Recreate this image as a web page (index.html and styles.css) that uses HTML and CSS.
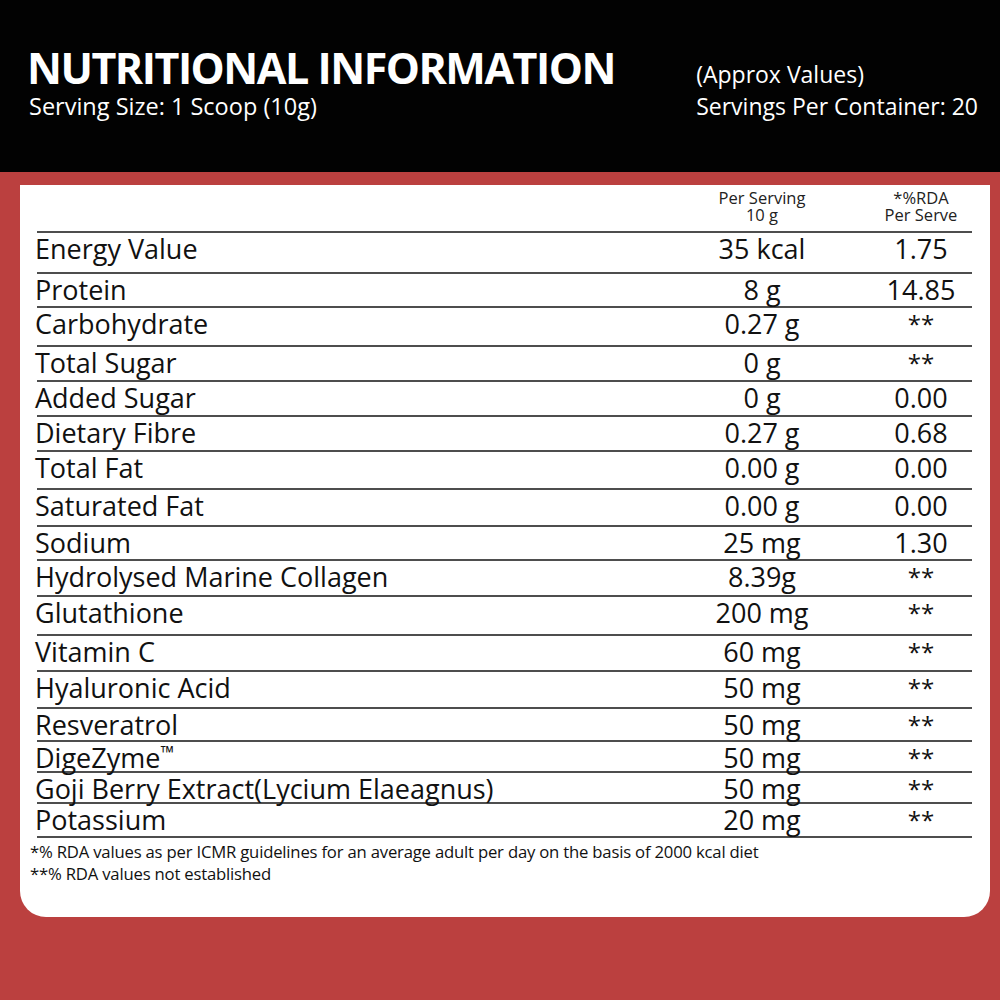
FILE: index.html
```html
<!DOCTYPE html>
<html lang="en">
<head>
<meta charset="utf-8">
<title>Nutritional Information</title>
<link rel="stylesheet" href="styles.css">
</head>
<body>
<header class="top">
  <div class="top-left">
    <h1 class="title">NUTRITIONAL INFORMATION</h1>
    <p class="sub sub-left">Serving Size: 1 Scoop (10g)</p>
  </div>
  <div class="top-right">
    <p class="approx">(Approx Values)</p>
    <p class="sub">Servings Per Container: 20</p>
  </div>
</header>
<main class="card">
  <div class="thead">
    <div class="th-name"></div>
    <div class="th">Per Serving<br>10 g</div>
    <div class="th">*%RDA<br>Per Serve</div>
  </div>
  <div class="tbody">
    <div class="row"><span class="name">Energy Value</span><span class="val">35 kcal</span><span class="rda">1.75</span></div>
    <div class="row"><span class="name">Protein</span><span class="val">8 g</span><span class="rda">14.85</span></div>
    <div class="row"><span class="name">Carbohydrate</span><span class="val">0.27 g</span><span class="rda star">**</span></div>
    <div class="row"><span class="name">Total Sugar</span><span class="val">0 g</span><span class="rda star">**</span></div>
    <div class="row"><span class="name">Added Sugar</span><span class="val">0 g</span><span class="rda">0.00</span></div>
    <div class="row"><span class="name">Dietary Fibre</span><span class="val">0.27 g</span><span class="rda">0.68</span></div>
    <div class="row"><span class="name">Total Fat</span><span class="val">0.00 g</span><span class="rda">0.00</span></div>
    <div class="row"><span class="name">Saturated Fat</span><span class="val">0.00 g</span><span class="rda">0.00</span></div>
    <div class="row"><span class="name">Sodium</span><span class="val">25 mg</span><span class="rda">1.30</span></div>
    <div class="row"><span class="name">Hydrolysed Marine Collagen</span><span class="val">8.39g</span><span class="rda star">**</span></div>
    <div class="row"><span class="name">Glutathione</span><span class="val">200 mg</span><span class="rda star">**</span></div>
    <div class="row"><span class="name">Vitamin C</span><span class="val">60 mg</span><span class="rda star">**</span></div>
    <div class="row"><span class="name">Hyaluronic Acid</span><span class="val">50 mg</span><span class="rda star">**</span></div>
    <div class="row"><span class="name">Resveratrol</span><span class="val">50 mg</span><span class="rda star">**</span></div>
    <div class="row"><span class="name">DigeZyme<span class="tm">™</span></span><span class="val">50 mg</span><span class="rda star">**</span></div>
    <div class="row"><span class="name">Goji Berry Extract(Lycium Elaeagnus)</span><span class="val">50 mg</span><span class="rda star">**</span></div>
    <div class="row"><span class="name">Potassium</span><span class="val">20 mg</span><span class="rda star">**</span></div>
  </div>
  <div class="notes">
    <p>*% RDA values as per ICMR guidelines for an average adult per day on the basis of 2000 kcal diet</p>
    <p>**% RDA values not established</p>
  </div>
</main>
</body>
</html>
```
FILE: styles.css
```css
* { box-sizing: border-box; }
html, body { margin: 0; padding: 0; }
body {
  width: 1000px;
  height: 1000px;
  background: #bb403f;
  font-family: "Open Sans", "Noto Sans", sans-serif;
  color: #111;
  overflow: hidden;
}
.top {
  background: #020202;
  color: #fff;
  height: 172px;
  display: flex;
  justify-content: space-between;
  padding: 0 22px 0 27px;
}
.top-left { padding-top: 49px; }
.top-right { padding-top: 61px; }
.title {
  margin: 0;
  font-size: 43px;
  line-height: 38px;
  font-weight: 700;
  letter-spacing: -1.5px;
}
.sub {
  margin: 0;
  font-size: 23px;
  line-height: 26px;
  font-weight: 400;
}
.sub-left {
  font-size: 23.5px;
  padding-left: 2px;
  padding-top: 6px;
}
.approx {
  margin: 0 0 6px 0;
  font-size: 23px;
  line-height: 26px;
}
.card {
  background: #fff;
  margin: 13px 10px 0 20px;
  height: 732px;
  border-radius: 0 0 26px 26px;
  padding: 0 18px 0 17px;
}
.thead, .row {
  display: grid;
  grid-template-columns: 1fr 150px 102px;
  column-gap: 33px;
  border-bottom: 2px solid #4e4e4e;
}
.thead {
  height: 48px;
  padding-top: 4px;
}
.th {
  font-size: 16.5px;
  line-height: 17px;
  text-align: center;
  color: #222;
}
.row {
  height: 36px;
  padding-top: 3px;
  font-size: 27px;
  line-height: 26px;
}
.tbody .row:nth-child(1) { height: 41px; }
.tbody .row:nth-child(2) { height: 34px; }
.tbody .row:nth-child(3) { height: 39px; }
.tbody .row:nth-child(4) { height: 35px; }
.tbody .row:nth-child(5) { height: 35px; }
.tbody .row:nth-child(6) { height: 35px; }
.tbody .row:nth-child(7) { height: 38px; }
.tbody .row:nth-child(8) { height: 37px; }
.tbody .row:nth-child(9) { height: 34px; }
.tbody .row:nth-child(10) { height: 36px; }
.tbody .row:nth-child(11) { height: 39px; }
.tbody .row:nth-child(12) { height: 36px; }
.tbody .row:nth-child(13) { height: 37px; }
.tbody .row:nth-child(14) { height: 33px; }
.tbody .row:nth-child(15) { height: 31px; }
.tbody .row:nth-child(16) { height: 31px; }
.tbody .row:nth-child(17) { height: 34px; }
.name { white-space: nowrap; margin-left: -2px; }
.val, .rda { text-align: center; white-space: nowrap; }
.star { font-size: 24px; }
.tm {
  font-size: 18px;
  vertical-align: top;
  line-height: 14px;
}
.notes {
  padding: 3px 0 0 0;
  margin-left: -7px;
  font-size: 16.7px;
  line-height: 22px;
  letter-spacing: -0.2px;
}
.notes p { margin: 0; }
```
